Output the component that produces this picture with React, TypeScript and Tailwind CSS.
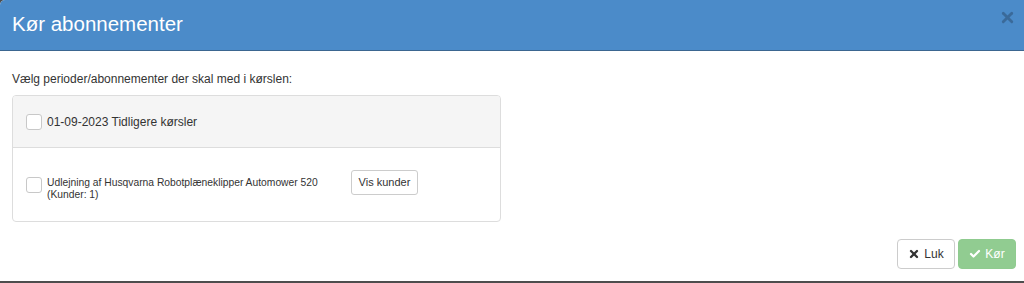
import React from 'react';
import { X, Check } from 'lucide-react';

function Checkbox() {
  return <span className="inline-block w-4 h-4 shrink-0 rounded-[3px] border border-[#c8c8c8] bg-white" />;
}

export default function App() {
  return (
    <div className="w-[1024px] h-[283px] bg-[#4d4d4d] font-['Liberation_Sans',Arial,sans-serif] text-[#333]">
      <div className="h-[281px] bg-white rounded-tl-[5px] overflow-hidden flex flex-col">
        {/* Header */}
        <div className="h-[51px] shrink-0 bg-[#4b8bc9] border-b border-[#3b6690] flex items-center justify-between pl-3 pr-[8px]">
          <h4 className="text-[20.5px] text-white leading-none -mt-[2px]">Kør abonnementer</h4>
          <X className="w-[17px] h-[17px] text-[#3a6a9a] -mt-[16px]" strokeWidth={4} />
        </div>

        {/* Body */}
        <div className="flex-1 px-3 pt-[20px]">
          <p className="text-[12px] leading-[16px] mb-[8px]">Vælg perioder/abonnementer der skal med i kørslen:</p>
          <div className="w-[489px] border border-[#ddd] rounded-[4px] overflow-hidden">
            <div className="h-[52px] bg-[#f5f5f5] border-b border-[#ddd] flex items-center pl-[13px] gap-[5px]">
              <Checkbox />
              <span className="text-[12px]">01-09-2023 Tidligere kørsler</span>
            </div>
            <div className="h-[73px] flex items-center pl-[13px]">
              <div className="flex items-center gap-[5px] w-[325px]">
                <Checkbox />
                <span className="text-[10.3px] leading-[12px] mt-[8px]">
                  Udlejning af Husqvarna Robotplæneklipper Automower 520
                  <br />
                  (Kunder: 1)
                </span>
              </div>
              <button className="h-[25px] w-[67px] border border-[#ccc] rounded-[3px] bg-white text-[11px] -mt-[5px]">
                Vis kunder
              </button>
            </div>
          </div>
        </div>

        {/* Footer */}
        <div className="flex justify-end gap-[3px] pr-[8px] pb-[12px]">
          <button className="h-[30px] w-[58px] border border-[#ccc] rounded-[4px] bg-white text-[12px] flex items-center justify-center gap-[4px]">
            <X className="w-[12px] h-[12px] text-[#333]" strokeWidth={4.5} />
            Luk
          </button>
          <button className="h-[30px] w-[58px] border border-[#8fcb8f] rounded-[4px] bg-[#91cc91] text-white text-[12px] flex items-center justify-center gap-[4px]">
            <Check className="w-[12px] h-[12px]" strokeWidth={4.5} />
            Kør
          </button>
        </div>
      </div>
    </div>
  );
}
